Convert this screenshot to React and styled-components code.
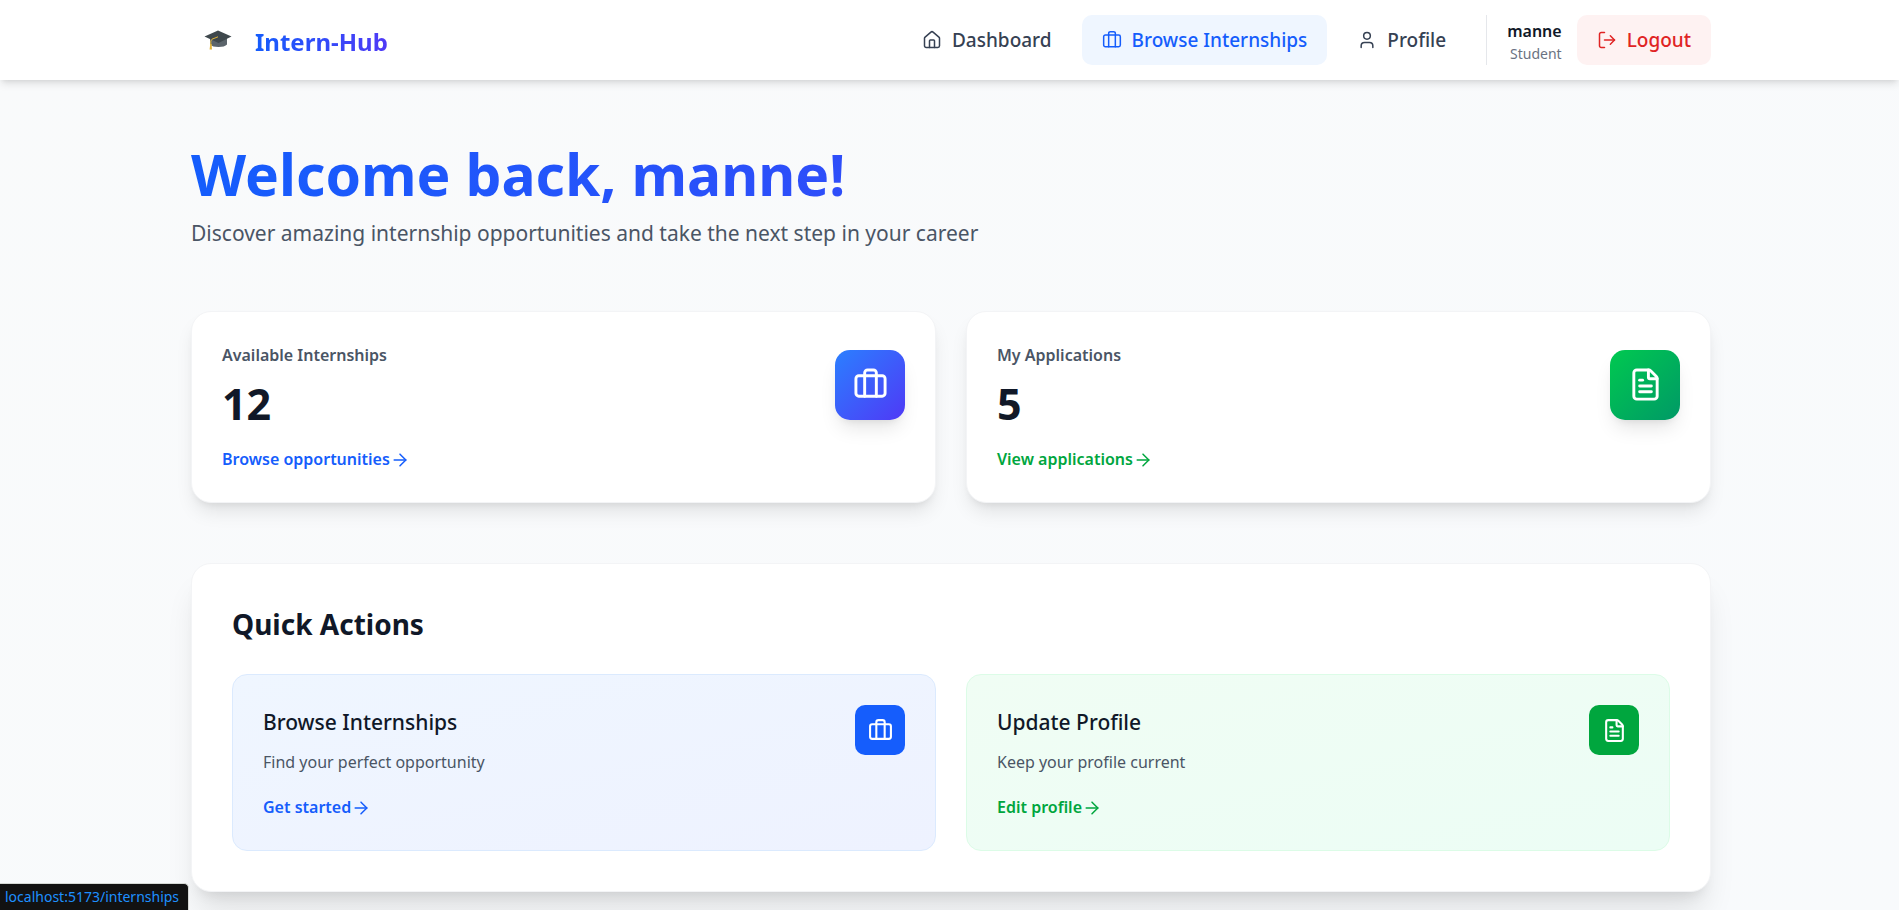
import React from "react";
import styled, { createGlobalStyle, css } from "styled-components";
import { ArrowRight, Briefcase, FileText, House, LogOut, User } from "lucide-react";

const GlobalStyle = createGlobalStyle`
  *, *::before, *::after { box-sizing: border-box; }
  body {
    margin: 0;
    font-family: "Segoe UI", "Noto Sans", "Open Sans", sans-serif;
    color: #101828;
    background: #f9fafb;
  }
  h1, h2, h3, p { margin: 0; }
  a { color: inherit; text-decoration: none; }
  button { font: inherit; border: 0; cursor: pointer; }
  svg { display: block; flex-shrink: 0; }
`;

const tones = {
  blue: {
    main: "#155dfc",
    tile: "linear-gradient(to bottom right, #2b7fff, #4f39f6)",
    panel: "linear-gradient(to bottom right, #eff6ff, #eef2ff)",
    border: "#dbeafe",
  },
  green: {
    main: "#00a63e",
    tile: "linear-gradient(to bottom right, #00c950, #009966)",
    panel: "linear-gradient(to bottom right, #f0fdf4, #ecfdf5)",
    border: "#dcfce7",
  },
};

const brandText = css`
  color: transparent;
  background: linear-gradient(to right, #155dfc, #4f39f6);
  background-clip: text;
  -webkit-background-clip: text;
`;

const Page = styled.div`
  min-height: 100vh;
  background: linear-gradient(to bottom right, #f9fafb, #f8fafc);
`;

const Header = styled.header`
  position: sticky;
  top: 0;
  z-index: 2;
  background: #fff;
  box-shadow: 0 5px 8px -1px rgba(0, 0, 0, 0.1), 0 3px 5px -3px rgba(0, 0, 0, 0.1);
`;

const Container = styled.div`
  max-width: 1601px;
  margin: 0 auto;
  padding: 0 39px 0 42px;
`;

const Bar = styled(Container)`
  display: flex;
  align-items: center;
  justify-content: space-between;
  height: 80px;
`;

const Brand = styled.a`
  display: flex;
  align-items: center;
  gap: 10px;
`;

const BrandMark = styled.span`
  display: grid;
  place-items: center;
  width: 54px;
  height: 50px;
`;

const BrandName = styled.span`
  ${brandText}
  padding-top: 2px;
  font-size: 24px;
  line-height: 35px;
  font-weight: 700;
`;

const Nav = styled.nav`
  display: flex;
  align-items: center;
  gap: 10px;
`;

const pill = css`
  display: flex;
  align-items: center;
  gap: 10px;
  height: 50px;
  padding: 0 20px;
  border-radius: 10px;
  font-size: 19px;
  line-height: 30px;
  font-weight: 500;
`;

const NavLink = styled.a`
  ${pill}
  color: ${(p) => (p.$active ? "#155dfc" : "#364153")};
  background: ${(p) => (p.$active ? "#eff6ff" : "transparent")};
`;

const Account = styled.div`
  display: flex;
  align-items: center;
  gap: 15px;
  height: 50px;
  margin-left: 10px;
  padding-left: 20px;
  border-left: 1px solid #e5e7eb;
`;

const Identity = styled.div`
  padding-top: 2px;
  text-align: right;
`;

const UserName = styled.p`
  font-size: 16px;
  line-height: 25px;
  font-weight: 600;
`;

const UserRole = styled.p`
  font-size: 14px;
  line-height: 20px;
  color: #6a7282;
`;

const LogoutButton = styled.button`
  ${pill}
  color: #e02424;
  background: #fef2f2;
`;

const Main = styled(Container).attrs({ as: "main" })`
  padding-top: 60px;
  padding-bottom: 60px;
  display: grid;
  gap: 60px;
`;

const Title = styled.h1`
  ${brandText}
  font-size: 57px;
  line-height: 68px;
  font-weight: 700;
`;

const Lead = styled.p`
  margin-top: 8px;
  font-size: 21px;
  line-height: 35px;
  color: #4a5565;
`;

const Columns = styled.div`
  display: grid;
  grid-template-columns: 1fr 1fr;
  gap: 30px;
`;

const StatCard = styled.article`
  padding: 30px;
  border: 1px solid #f3f4f6;
  border-radius: 20px;
  background: #fff;
  box-shadow: 0 12px 19px -4px rgba(0, 0, 0, 0.1), 0 5px 8px -5px rgba(0, 0, 0, 0.1);
`;

const StatHead = styled.div`
  display: flex;
  align-items: center;
  justify-content: space-between;
`;

const StatLabel = styled.p`
  font-size: 16px;
  line-height: 27px;
  font-weight: 600;
  color: #4a5565;
`;

const StatValue = styled.p`
  margin-top: 12px;
  font-size: 43px;
  line-height: 46px;
  font-weight: 700;
`;

const StatTile = styled.div`
  display: grid;
  place-items: center;
  width: 70px;
  height: 70px;
  border-radius: 15px;
  color: #fff;
  background: ${(p) => tones[p.$tone].tile};
  box-shadow: 0 12px 19px -4px rgba(0, 0, 0, 0.1), 0 5px 8px -5px rgba(0, 0, 0, 0.1);
`;

const MoreLink = styled.a`
  display: flex;
  align-items: center;
  width: fit-content;
  margin-top: 20px;
  font-size: 16px;
  line-height: 25px;
  font-weight: 600;
  color: ${(p) => tones[p.$tone].main};
`;

const ActionsCard = styled.section`
  padding: 40px;
  border: 1px solid #f3f4f6;
  border-radius: 20px;
  background: #fff;
  box-shadow: 0 25px 31px -6px rgba(0, 0, 0, 0.1), 0 10px 13px -8px rgba(0, 0, 0, 0.1);
`;

const SectionTitle = styled.h2`
  margin-bottom: 30px;
  font-size: 28px;
  line-height: 40px;
  font-weight: 700;
`;

const ActionPanel = styled.article`
  display: flex;
  align-items: flex-start;
  justify-content: space-between;
  padding: 30px;
  border: 1px solid ${(p) => tones[p.$tone].border};
  border-radius: 15px;
  background: ${(p) => tones[p.$tone].panel};
`;

const ActionTitle = styled.h3`
  font-size: 21px;
  line-height: 35px;
  font-weight: 500;
`;

const ActionText = styled.p`
  margin-top: 10px;
  font-size: 16px;
  line-height: 25px;
  color: #4a5565;
`;

const ActionTile = styled.div`
  display: grid;
  place-items: center;
  width: 50px;
  height: 50px;
  border-radius: 10px;
  color: #fff;
  background: ${(p) => tones[p.$tone].main};
`;

const LinkStatus = styled.div`
  position: fixed;
  left: 0;
  bottom: 0;
  z-index: 3;
  padding: 3px 9px 3px 5px;
  border-top: 1px solid #d5d9d5;
  border-right: 1px solid #d5d9d5;
  border-radius: 0 5px 0 0;
  font-size: 14px;
  line-height: 20px;
  color: #1e90ff;
  background: #121212;
`;

function GraduationCap() {
  return (
    <svg width="28" height="20" viewBox="0 0 28 20" aria-hidden="true">
      <path d="M6 9v5.500c1.500 1.700 4.500 2.500 8.500 2.500s7-.8 8.500-2.500V8z" fill="#5b646b" />
      <path d="M14 0.500 27.500 6.500 14.500 13 0.500 6.500z" fill="#3f484d" />
      <path d="M14 6.800 8 9.200 6.800 11v4" fill="none" stroke="#e2b43a" strokeWidth="1" />
      <path d="M6.200 14h1.400l.4 5.500H5.600z" fill="#e2b43a" />
    </svg>
  );
}

const stats = [
  { label: "Available Internships", value: 12, link: "Browse opportunities", tone: "blue", Icon: Briefcase },
  { label: "My Applications", value: 5, link: "View applications", tone: "green", Icon: FileText },
];

const actions = [
  { title: "Browse Internships", text: "Find your perfect opportunity", link: "Get started", tone: "blue", Icon: Briefcase },
  { title: "Update Profile", text: "Keep your profile current", link: "Edit profile", tone: "green", Icon: FileText },
];

const pages = [
  { label: "Dashboard", href: "#dashboard", Icon: House },
  { label: "Browse Internships", href: "#internships", Icon: Briefcase, active: true },
  { label: "Profile", href: "#profile", Icon: User },
];

export default function App() {
  return (
    <Page>
      <GlobalStyle />
      <Header>
        <Bar>
          <Brand href="#home">
            <BrandMark><GraduationCap /></BrandMark>
            <BrandName>Intern-Hub</BrandName>
          </Brand>
          <Nav>
            {pages.map(({ label, href, Icon, active }) => (
              <NavLink key={label} href={href} $active={active}>
                <Icon size={20} strokeWidth={1.8} />
                {label}
              </NavLink>
            ))}
            <Account>
              <Identity>
                <UserName>manne</UserName>
                <UserRole>Student</UserRole>
              </Identity>
              <LogoutButton type="button">
                <LogOut size={20} strokeWidth={1.8} />
                Logout
              </LogoutButton>
            </Account>
          </Nav>
        </Bar>
      </Header>

      <Main>
        <div>
          <Title>Welcome back, manne!</Title>
          <Lead>Discover amazing internship opportunities and take the next step in your career</Lead>
        </div>

        <Columns>
          {stats.map(({ label, value, link, tone, Icon }) => (
            <StatCard key={label}>
              <StatHead>
                <div>
                  <StatLabel>{label}</StatLabel>
                  <StatValue>{value}</StatValue>
                </div>
                <StatTile $tone={tone}><Icon size={35} /></StatTile>
              </StatHead>
              <MoreLink href="#more" $tone={tone}>{link}<ArrowRight size={20} strokeWidth={1.8} /></MoreLink>
            </StatCard>
          ))}
        </Columns>

        <ActionsCard>
          <SectionTitle>Quick Actions</SectionTitle>
          <Columns>
            {actions.map(({ title, text, link, tone, Icon }) => (
              <ActionPanel key={title} $tone={tone}>
                <div>
                  <ActionTitle>{title}</ActionTitle>
                  <ActionText>{text}</ActionText>
                  <MoreLink href="#go" $tone={tone}>{link}<ArrowRight size={20} strokeWidth={1.8} /></MoreLink>
                </div>
                <ActionTile $tone={tone}><Icon size={25} /></ActionTile>
              </ActionPanel>
            ))}
          </Columns>
        </ActionsCard>
      </Main>

      <LinkStatus>localhost:5173/internships</LinkStatus>
    </Page>
  );
}
